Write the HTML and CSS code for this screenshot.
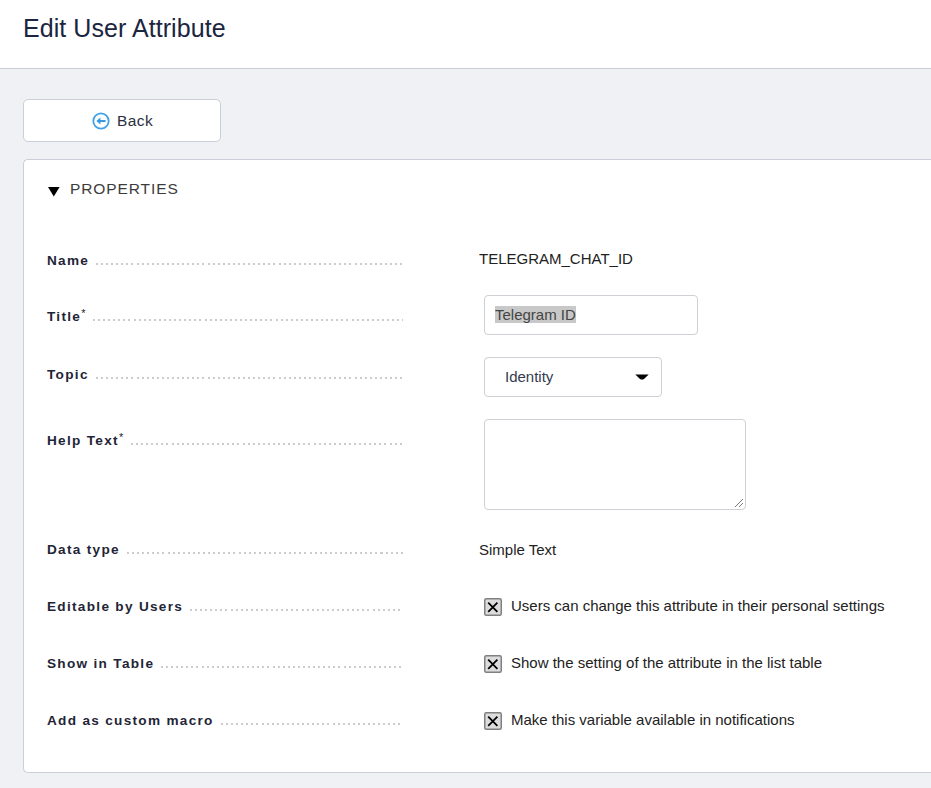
FILE: index.html
```html
<!DOCTYPE html>
<html lang="en">
<head>
<meta charset="utf-8">
<title>Edit User Attribute</title>
<link rel="stylesheet" href="styles.css">
</head>
<body>
<header class="header"><h1><span>Edit User Attribute</span></h1></header>
<main>
  <a class="back">
    <svg width="18" height="18" viewBox="0 0 18 18"><circle cx="9" cy="9" r="7.7" fill="none" stroke="#42a0e6" stroke-width="1.8"/><path d="M4.4 9l4-3.4v2.4h5.2v2H8.4v2.4z" fill="#3598e2"/></svg>
    <span>Back</span>
  </a>
  <section class="panel">
    <h2><svg width="12" height="10" viewBox="0 0 12 10"><path d="M0 .1h11.6L5.8 9.6z"/></svg><span>PROPERTIES</span></h2>
    <div class="row name"><div class="label"><span>Name</span><i></i></div><div class="value"><span>TELEGRAM_CHAT_ID</span></div></div>
    <div class="row title"><div class="label"><span>Title<sup>*</sup></span><i></i></div><div class="box input"><span class="selected">Telegram ID</span></div></div>
    <div class="row topic"><div class="label"><span>Topic</span><i></i></div><div class="box select"><span>Identity</span><svg width="14" height="6" viewBox="0 0 14 6"><path d="M.3.5h13.4L9 4.9q-2 1-4 0z"/></svg></div></div>
    <div class="row help"><div class="label"><span>Help Text<sup>*</sup></span><i></i></div><div class="box area"><svg width="10" height="10" viewBox="0 0 10 10"><path d="M1 9L9 1M5 9l4-4" stroke="#555" stroke-width=".8" fill="none"/></svg></div></div>
    <div class="row type"><div class="label"><span>Data type</span><i></i></div><div class="value"><span>Simple Text</span></div></div>
    <div class="row check"><div class="label"><span>Editable by Users</span><i></i></div><div class="option"><svg width="18" height="18" viewBox="0 0 18 18"><rect x=".75" y=".75" width="16.5" height="16.5" rx="1.5" fill="#dcdcdc" stroke="#808080" stroke-width="1.5"/><path d="M4.2 4.7l9.2 9.2M13.4 4.7l-9.2 9.2" stroke="#000" stroke-width="1.8"/></svg><span>Users can change this attribute in their personal settings</span></div></div>
    <div class="row check"><div class="label"><span>Show in Table</span><i></i></div><div class="option"><svg width="18" height="18" viewBox="0 0 18 18"><rect x=".75" y=".75" width="16.5" height="16.5" rx="1.5" fill="#dcdcdc" stroke="#808080" stroke-width="1.5"/><path d="M4.2 4.7l9.2 9.2M13.4 4.7l-9.2 9.2" stroke="#000" stroke-width="1.8"/></svg><span>Show the setting of the attribute in the list table</span></div></div>
    <div class="row check"><div class="label"><span>Add as custom macro</span><i></i></div><div class="option"><svg width="18" height="18" viewBox="0 0 18 18"><rect x=".75" y=".75" width="16.5" height="16.5" rx="1.5" fill="#dcdcdc" stroke="#808080" stroke-width="1.5"/><path d="M4.2 4.7l9.2 9.2M13.4 4.7l-9.2 9.2" stroke="#000" stroke-width="1.8"/></svg><span>Make this variable available in notifications</span></div></div>
  </section>
</main>
</body>
</html>
```
FILE: styles.css
```css
* { box-sizing: border-box; }
body { margin: 0; height: 788px; overflow: hidden; background: #f0f1f4; color: #222; font: 15px/18px "Liberation Sans", Arial, sans-serif; }
svg { display: block; flex: none; }
.header { height: 69px; padding: 14px 23px; background: #fff; border-bottom: 1px solid #c9cbd6; }
h1 { margin: 0; font-size: 25px; line-height: 29px; font-weight: 400; letter-spacing: .06px; color: #1b2540; }
main { padding: 30px 0 0 23px; }
.back { display: flex; align-items: center; justify-content: center; gap: 7px; width: 198px; height: 43px; padding-left: 1px; background: #fff; border: 1px solid #cbcdd8; border-radius: 5px; font-size: 15.5px; letter-spacing: .4px; color: #2a3040; }
.panel { height: 614px; margin-top: 17px; padding: 20px 0 0 23px; background: #fff; border: 1px solid #cbcdd8; border-right: 0; border-radius: 5px 0 0 5px; }
h2 { display: flex; gap: 10px; margin: 0; height: 70px; font-size: 15.5px; line-height: 18px; font-weight: 400; letter-spacing: .9px; color: #3c3c3c; }
h2 svg { margin: 7px 0 0 1px; }
.row { display: flex; align-items: flex-start; }
.label { display: flex; width: 356px; margin-right: 81px; gap: 6px; font-size: 13.6px; font-weight: 700; letter-spacing: 1.3px; color: #1f2536; white-space: nowrap; }
.label span { padding-top: 1px; }
.label i { flex: 1; height: 2px; margin: 12px 0 0 1px; background: repeating-linear-gradient(90deg, #ccc 0 2px, transparent 2px 5.07px); }
sup { font-size: 11px; font-weight: 400; line-height: 0; letter-spacing: 1px; vertical-align: 4px; }
.name { height: 45px; padding-top: 1px; }
.value { margin: -1px 0 0 -5px; }
.title, .topic { height: 62px; }
.title .label { padding-top: 12px; }
.topic .label { padding-top: 8px; }
.help { height: 121px; }
.help .label { padding-top: 12px; }
.box { display: flex; align-items: center; height: 40px; border: 1px solid #cfd0d6; border-radius: 4px; }
.input { width: 214px; padding: 0 0 1px 10px; }
.selected { background: #c8c8c8; color: #444; line-height: 17px; }
.select { width: 178px; justify-content: space-between; padding: 0 12px 0 20px; color: #333c4e; }
.area { width: 262px; height: 91px; align-items: flex-end; justify-content: flex-end; padding: 1px; }
.type { height: 57px; }
.type .value { margin-top: 1px; }
.check { height: 57px; }
.option { display: flex; gap: 9px; }
.option svg { margin-top: 1px; }
```
